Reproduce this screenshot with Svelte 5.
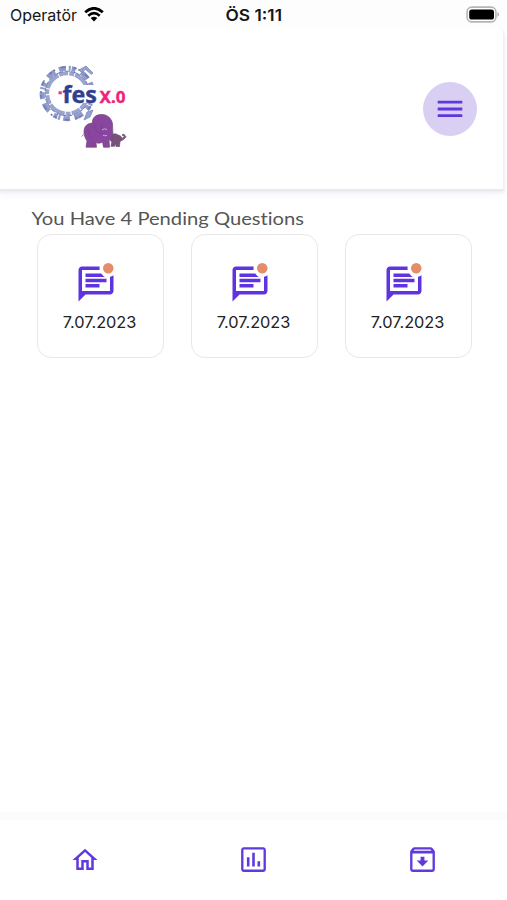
<script>
  const questions = ['7.07.2023', '7.07.2023', '7.07.2023'];
</script>

<div class="screen">
  <div class="status">
    <div class="carrier">
      <svg width="68" height="22"><text x="0" y="16" font-size="16" textLength="67" lengthAdjust="spacingAndGlyphs">Operatör</text></svg>
      <svg class="wifi" width="20" height="15" viewBox="0 0 20 15" fill="none" stroke="#000">
        <path d="M1.2 5.3Q10-2.6 18.8 5.3" stroke-width="2.8" />
        <path d="M4.3 8.7Q10 3.7 15.7 8.7" stroke-width="2.6" />
        <path d="M6.7 11.1Q10 8.3 13.3 11.1L10 14.5Z" fill="#000" stroke="none" />
      </svg>
    </div>
    <svg class="clock" width="58" height="22"><text x="-0.5" y="16" font-size="16" font-weight="600" textLength="56.5" lengthAdjust="spacingAndGlyphs">ÖS 1:11</text></svg>
    <svg class="battery" width="34" height="18" viewBox="0 0 34 18">
      <rect x="1.1" y="1.1" width="28.8" height="14.8" rx="4.6" fill="#fff" stroke="#b5b5b5" stroke-width="1.6" />
      <rect x="3.2" y="3.4" width="24.8" height="10.2" rx="2.6" fill="#000" />
      <path d="M31.3 6.2q1.8.6 1.8 2.3t-1.8 2.3z" fill="#b5b5b5" />
    </svg>
  </div>

  <header>
    <svg class="logo" width="110" height="105" viewBox="0 0 110 105">
      <g fill="none" stroke="#6f7cb8">
        <circle cx="37.3" cy="38.5" r="20.2" stroke-width="4" stroke="#99a4cf" stroke-dasharray="17 1 9 1.2 5 1" />
        <circle cx="37.3" cy="38.5" r="22.3" stroke-width="1" stroke-dasharray="10 2 5 1" />
        <circle cx="37.3" cy="38.5" r="25.2" stroke-width="5" stroke="#8f9ac8" stroke-dasharray="7 3 2 1 4 6 9 4.5" />
        <circle cx="37.3" cy="38.5" r="26.4" stroke-width="1.6" stroke-dasharray="3 2 2 6 5 8" />
      </g>
      <path d="M49 15l7-4 7 7-1.5 1.5-6-5-4 3zM53 18l5 5M57 57l6-2-3 7-6 3z" fill="#98a2cd" stroke="#7481bb" stroke-width=".7" />
      <path d="M31 30h35v18H31z" fill="#fff" />
      <g font-family="'Noto Sans', 'Open Sans', sans-serif" font-weight="700">
        <text x="32.6" y="47.5" font-size="23" fill="#30408f" stroke="#30408f" stroke-width=".4" textLength="34.4" lengthAdjust="spacingAndGlyphs">fes</text>
        <text x="69.5" y="47.5" font-size="16" fill="#ee2379" stroke="#ee2379" stroke-width=".35" textLength="26" lengthAdjust="spacingAndGlyphs">X.0</text>
      </g>
      <rect x="28.5" y="36.3" width="3.3" height="3" fill="#e83a7a" />
      <g stroke="#6b4c70" stroke-width=".7" stroke-linejoin="round">
        <path d="M53.5 79.5L51.8 81.5" fill="none" />
        <path d="M54 77C54 71 57 68.5 62.5 68C62 62.5 66 59.5 71 59.5C77 59 82 63.5 82.5 69C83 75 82 80 85 82.5C87.5 84 89.5 82 92 83L90.5 86C87 88.5 81 87.5 79 84L79.5 92.2H73.5L72.5 87C70 88.5 68 88.5 66 87.5L66.5 92.2H56L57 86C55 83 54 80 54 77Z" fill="#89469f" />
        <path d="M82 82C82 79 85 78 87 79.5L90.5 81L92 83.5L94.5 81.5L92 80L93.7 79L96 81.8C94.5 84 92.5 85.5 90 86L89.5 91.5H86L85.8 88L84.5 91.3H81L82 86Z" fill="#785279" />
      </g>
      <path d="M64 68Q65 77 71 79Q73 75 71.5 69M63 88v4M58 76q1 6 4 8" fill="none" stroke="#753b88" stroke-width=".6" />
      <path d="M72 74.8Q74.5 73 77 74.5M73 80.4q2 .8 4 0" fill="none" stroke="#c9a5cf" stroke-width="1" />
    </svg>
    <button class="menu" aria-label="Menu">
      <svg width="26" height="18" viewBox="0 0 26 18" fill="#6236dc">
        <path d="M.7.7h24.6v2.8H.7zM.7 7.6h24.6v2.8H.7zM.7 14.3h24.6v2.8H.7z" />
      </svg>
    </button>
  </header>

  <main>
    <h1><svg width="280" height="28"><text x="0.5" y="22" font-size="18.2" fill="#555" textLength="272.5" lengthAdjust="spacingAndGlyphs">You Have 4 Pending Questions</text></svg></h1>
    <div class="cards">
      {#each questions as date}
        <div class="card">
          <svg width="42" height="42" viewBox="0 0 24 24" fill="#5f34e0">
            <path d="M14.1 2H4C2.9 2 2 2.9 2 4v18l4-4h14c1.1 0 2-.9 2-2V7c-.6.45-1.28.76-2 .9V16H4V4h10.1c-.14-.65-.14-1.35 0-2z" />
            <path d="M6 6h9.03c.52.77 1.2 1.45 1.97 2H6zM6 9h12v2H6zM6 12h8v2H6z" />
            <circle cx="19" cy="3" r="3" fill="#e58c68" />
          </svg>
          <svg width="76" height="22"><text x="38.6" y="17" text-anchor="middle" font-size="15.8" fill="#222" textLength="73.5" lengthAdjust="spacingAndGlyphs">{date}</text></svg>
        </div>
      {/each}
    </div>
  </main>

  <nav>
    <a href="#home" aria-label="Home">
      <svg width="30" height="30" viewBox="0 0 24 24" fill="#6039df">
        <path d="M12 5.69l5 4.5V18h-2v-6H9v6H7v-7.81l5-4.5M12 3L2 12h3v8h6v-6h2v6h6v-8h3L12 3z" />
      </svg>
    </a>
    <a href="#stats" aria-label="Statistics">
      <svg width="33" height="33" viewBox="0 0 24 24" fill="#6039df">
        <path d="M19 3H5c-1.1 0-2 .9-2 2v14c0 1.1.9 2 2 2h14c1.1 0 2-.9 2-2V5c0-1.1-.9-2-2-2zm.3 16.3H4.7V4.7h14.6v14.6zM7.2 10.3h1.9V17H7.2zM11.05 7h1.9v10h-1.9zM14.9 13.2h1.9V17h-1.9z" />
      </svg>
    </a>
    <a href="#archive" aria-label="Archive">
      <svg width="33" height="33" viewBox="0 0 24 24" fill="#6039df">
        <path d="M20.54 5.23l-1.39-1.68C18.88 3.21 18.47 3 18 3H6c-.47 0-.88.21-1.16.55L3.46 5.23C3.17 5.57 3 6.02 3 6.5V19c0 1.1.9 2 2 2h14c1.1 0 2-.9 2-2V6.5c0-.48-.17-.93-.46-1.27zM6.24 4.7h11.52l.81.97H5.44l.8-.97zM4.7 19.3V7.6h14.6v11.7H4.7zM10.6 10h2.8v2.7h2.8L12 17l-4.2-4.3h2.8z" />
      </svg>
    </a>
  </nav>
</div>

<style>
  :global(body) { background: #fff; }
  .screen {
    width: 507px;
    height: 900px;
    display: flex;
    flex-direction: column;
    overflow: hidden;
    background: #fff;
    font-family: Inter, 'Liberation Sans', sans-serif;
  }
  svg { display: block; flex: none; }
  .status {
    height: 27px;
    flex: none;
    box-sizing: border-box;
    padding: 5px 7px 0 10px;
    display: grid;
    grid-template-columns: 1fr 58px 1fr;
    background: #fdfdfd;
  }
  .status text { fill: #161616; }
  .clock { overflow: visible; }
  .carrier { display: flex; gap: 6px; }
  .wifi { margin-top: 2px; }
  .battery { justify-self: end; margin-top: 0.5px; }
  header {
    flex: none;
    box-sizing: border-box;
    width: 503px;
    height: 162px;
    padding: 28px 26px 0 30px;
    display: flex;
    justify-content: space-between;
    background: #fff;
    border-radius: 0 7px 0 0;
    box-shadow: 0 2px 3px 1px #e8e9ef, 0 4px 10px 2px #f5f6fc;
    clip-path: inset(0 -4px -16px 0);
  }
  .menu {
    width: 54px;
    height: 54px;
    margin-top: 27px;
    padding: 0;
    border: 0;
    border-radius: 50%;
    display: grid;
    place-items: center;
    background: #d9cff3;
  }
  main { flex: 1; padding: 14px 0 0 31px; position: relative; }
  h1 {
    margin: 0;
    height: 31px;
    font-family: Lato, 'Open Sans', sans-serif;
    font-weight: 400;
    font-variant-ligatures: none;
  }
  .cards { display: flex; gap: 27.5px; padding-left: 6px; }
  .card {
    width: 126.5px;
    height: 124px;
    flex: none;
    box-sizing: border-box;
    border: 1px solid #e7e7e9;
    border-radius: 14px;
    padding: 28px 2px 0 0;
    display: flex;
    flex-direction: column;
    align-items: center;
    gap: 6px;
    background: #fff;
  }
  .card svg { overflow: visible; }
  .card svg:first-child { margin-right: 7px; }
  nav {
    flex: none;
    height: 80px;
    box-sizing: border-box;
    padding-bottom: 1px;
    display: grid;
    grid-template-columns: repeat(3, 169px);
    background: #fff;
    box-shadow: 0 -8px 0 #fbfbfb;
  }
  nav a { display: grid; place-items: center; }
</style>
